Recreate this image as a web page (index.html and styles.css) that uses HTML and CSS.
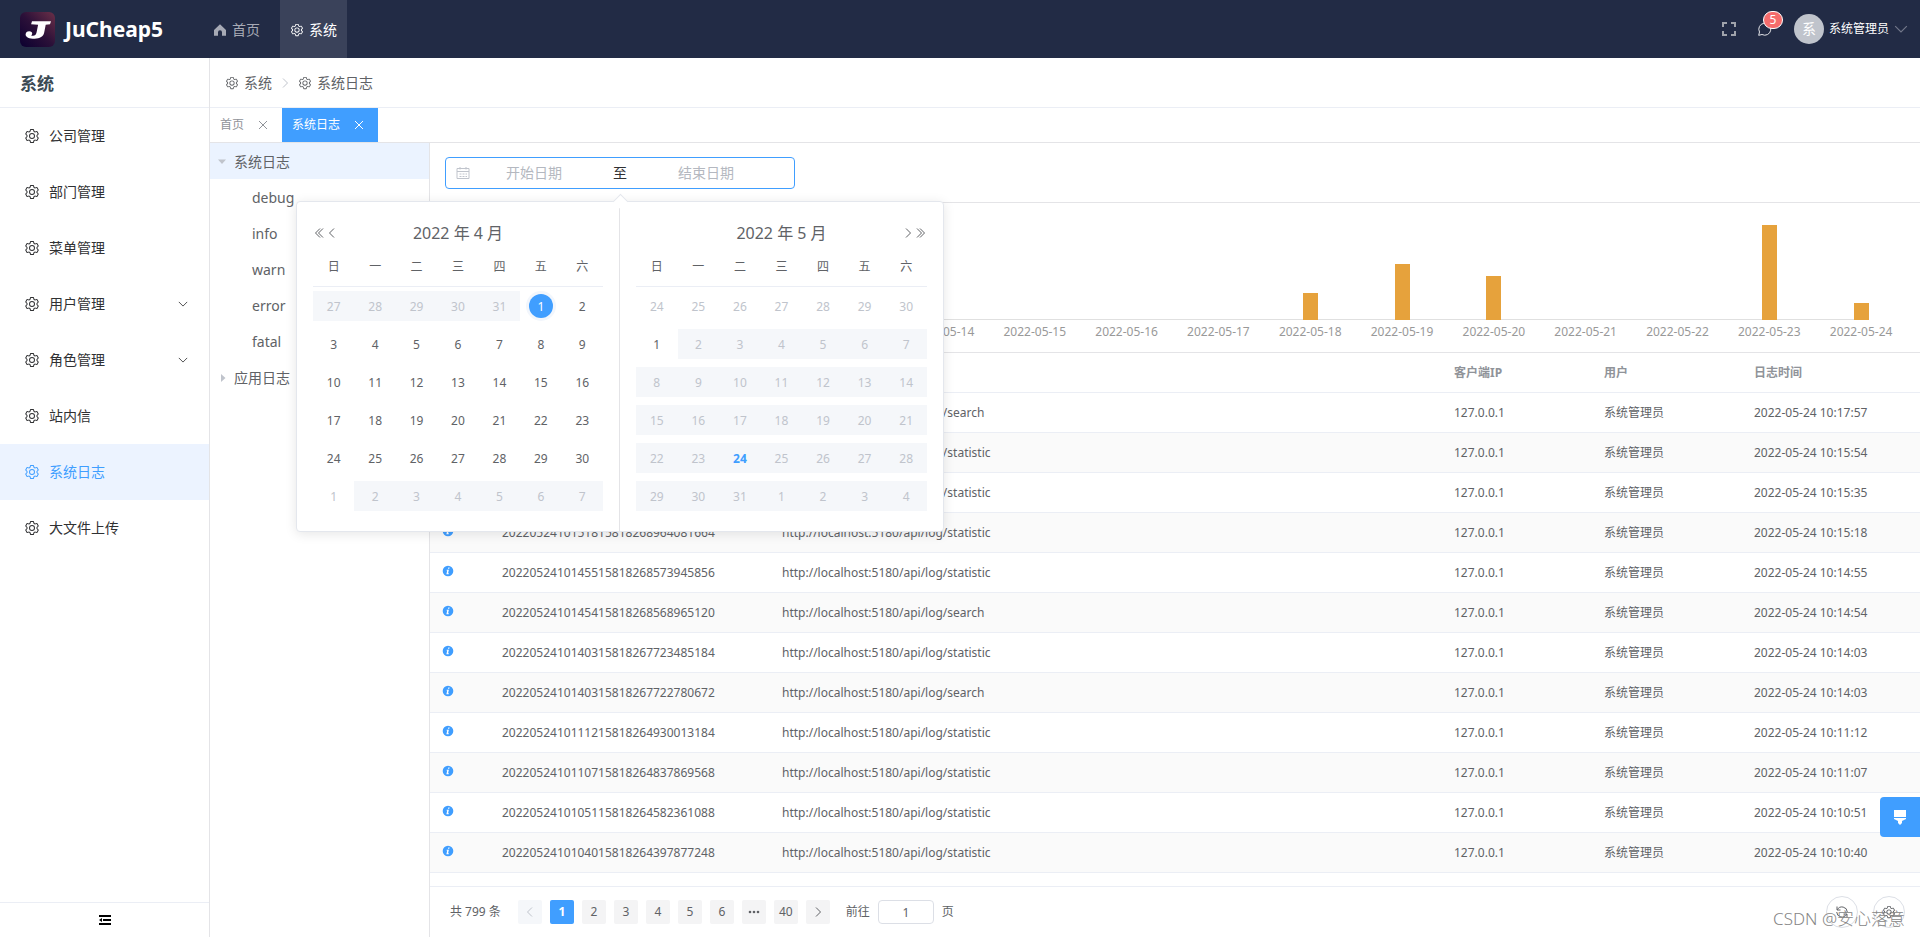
FILE: index.html
```html
<!DOCTYPE html>
<html lang="zh-CN">
<head>
<meta charset="utf-8">
<title>JuCheap5</title>
<link rel="stylesheet" href="styles.css">
</head>
<body>
<svg class="sprite" aria-hidden="true">
  <symbol id="gear" viewBox="0 0 1024 1024"><path d="M600.704 64a32 32 0 0 1 30.464 22.208l35.2 109.376c14.784 7.232 28.928 15.36 42.432 24.512l112.384-24.192a32 32 0 0 1 34.432 15.36L944.32 364.8a32 32 0 0 1-4.032 37.504l-77.12 85.12a357.12 357.12 0 0 1 0 49.024l77.12 85.248a32 32 0 0 1 4.032 37.504l-88.704 153.6a32 32 0 0 1-34.432 15.296L708.8 803.904c-13.44 9.088-27.648 17.28-42.368 24.512l-35.264 109.376A32 32 0 0 1 600.704 960H423.296a32 32 0 0 1-30.464-22.208L357.696 828.48a351.616 351.616 0 0 1-42.56-24.64l-112.32 24.256a32 32 0 0 1-34.432-15.36L79.68 659.2a32 32 0 0 1 4.032-37.504l77.12-85.248a357.12 357.12 0 0 1 0-48.896l-77.12-85.248A32 32 0 0 1 79.68 364.8l88.704-153.6a32 32 0 0 1 34.432-15.296l112.32 24.256c13.568-9.152 27.776-17.408 42.56-24.64l35.2-109.312A32 32 0 0 1 423.232 64H600.64zm-23.424 64H446.72l-36.352 113.088-24.512 11.968a294.113 294.113 0 0 0-34.816 20.096l-22.656 15.36-116.224-25.088-65.28 113.152 79.68 88.192-1.92 27.136a293.12 293.12 0 0 0 0 40.192l1.92 27.136-79.808 88.192 65.344 113.152 116.224-25.024 22.656 15.296a294.113 294.113 0 0 0 34.816 20.096l24.512 11.968L446.72 896h130.688l36.48-113.152 24.448-11.904a288.282 288.282 0 0 0 34.752-20.096l22.592-15.296 116.288 25.024 65.28-113.152-79.744-88.192 1.92-27.136a293.12 293.12 0 0 0 0-40.256l-1.92-27.136 79.808-88.128-65.344-113.152-116.288 24.96-22.592-15.232a287.616 287.616 0 0 0-34.752-20.096l-24.448-11.904L577.344 128zM512 320a192 192 0 1 1 0 384 192 192 0 0 1 0-384zm0 64a128 128 0 1 0 0 256 128 128 0 0 0 0-256z"/></symbol>
  <symbol id="home" viewBox="0 0 14 14"><path d="M7 1.300 13 7v5.700H9V9.200a2 2 0 0 0-4 0v3.500H1V7z"/></symbol>
  <symbol id="down" viewBox="0 0 12 12"><path class="line" d="M1 3.500 6 8.500l5-5"/></symbol>
  <symbol id="left" viewBox="0 0 12 12"><path class="line" d="M8 1.500 3.500 6 8 10.500"/></symbol>
  <symbol id="right" viewBox="0 0 12 12"><path class="line" d="M4 1.500 8.500 6 4 10.500"/></symbol>
  <symbol id="dleft" viewBox="0 0 12 12"><path class="line" d="M6 1.500 1.500 6 6 10.500M9 1.500 4.500 6l4.500 4.500"/></symbol>
  <symbol id="dright" viewBox="0 0 12 12"><path class="line" d="M3 1.500 7.500 6 3 10.500M6 1.500 10.500 6 6 10.500"/></symbol>
  <symbol id="close" viewBox="0 0 10 10"><path class="line" d="M1 1l8 8M9 1 1 9"/></symbol>
  <symbol id="info" viewBox="0 0 12 12"><circle cx="6" cy="6" r="5.300"/><path fill="#fff" d="M6.300 2.400h1.300L7.300 3.800H6zM4.700 4.700h2.200L6.100 8.300h.8l-.2.9H4.400l.8-3.600h-.7z"/></symbol>
</svg>

<div class="app">
  <header class="topbar">
    <a class="brand" href="#">
      <svg class="logo" viewBox="0 0 35 35" aria-hidden="true">
        <defs><linearGradient id="lg" x1="0" y1="1" x2="1" y2="0"><stop offset="0" stop-color="#0b0030"/><stop offset=".5" stop-color="#2b1038"/><stop offset="1" stop-color="#6b3048"/></linearGradient></defs>
        <rect width="35" height="35" rx="6" fill="url(#lg)"/>
        <path fill="#fff" d="M12 9.300h19l-1 2.900-4.300.6-1.500 7.800c-.8 4-4.300 6.200-9.600 6.200-5.400 0-9-1.500-9-4.300 0-2.100 1.500-3.300 3.600-3.300 2 0 3.200 1 3 2.600-.1.800-.5 1.300-1.100 1.700 3 1 4.900-.2 5.500-3.200l1.500-7.500-7-.6z"/>
      </svg>
      <span>JuCheap5</span>
    </a>
    <nav class="topnav">
      <a href="#"><svg class="i14"><use href="#home"/></svg>首页</a>
      <a href="#" class="on"><svg class="i14"><use href="#gear"/></svg>系统</a>
    </nav>
    <div class="tools">
      <button class="tool" aria-label="全屏"><svg class="i14 dim" viewBox="0 0 14 14"><path fill="none" stroke="currentColor" stroke-width="2" d="M1 5V1h4M9 1h4v4M13 9v4H9M5 13H1V9"/></svg></button>
      <button class="tool msg" aria-label="消息"><svg class="i14" viewBox="0 0 14 14"><path fill="none" stroke="currentColor" d="M.7 13.300 1.500 10A6 6 0 1 1 4 12.500z"/></svg><span class="badge">5</span></button>
      <button class="user"><span class="avatar">系</span>系统管理员<svg class="i14 caret"><use href="#down"/></svg></button>
    </div>
  </header>

  <div class="body">
    <aside class="side">
      <h2>系统</h2>
      <ul class="menu">
        <li><a href="#"><svg class="i16"><use href="#gear"/></svg>公司管理</a></li>
        <li><a href="#"><svg class="i16"><use href="#gear"/></svg>部门管理</a></li>
        <li><a href="#"><svg class="i16"><use href="#gear"/></svg>菜单管理</a></li>
        <li><a href="#"><svg class="i16"><use href="#gear"/></svg>用户管理<svg class="i10 end"><use href="#down"/></svg></a></li>
        <li><a href="#"><svg class="i16"><use href="#gear"/></svg>角色管理<svg class="i10 end"><use href="#down"/></svg></a></li>
        <li><a href="#"><svg class="i16"><use href="#gear"/></svg>站内信</a></li>
        <li><a href="#" class="on"><svg class="i16"><use href="#gear"/></svg>系统日志</a></li>
        <li><a href="#"><svg class="i16"><use href="#gear"/></svg>大文件上传</a></li>
      </ul>
      <button class="fold" aria-label="收起菜单"><svg class="i12" viewBox="0 0 12 12"><path d="M0 1h12v2H0zM4 5h8v2H4zM0 9h12v2H0zM3 4v4L0 6z"/></svg></button>
    </aside>

    <div class="main">
      <nav class="crumbs">
        <a href="#"><svg class="i14"><use href="#gear"/></svg>系统</a>
        <svg class="i12 sep"><use href="#right"/></svg>
        <a href="#"><svg class="i14"><use href="#gear"/></svg>系统日志</a>
      </nav>
      <div class="tabs">
        <button>首页<svg class="i10"><use href="#close"/></svg></button>
        <button class="on">系统日志<svg class="i10"><use href="#close"/></svg></button>
      </div>
      <div class="work">
        <ul class="tree">
          <li class="on"><i class="tri open"></i>系统日志</li>
          <li class="leaf">debug</li>
          <li class="leaf">info</li>
          <li class="leaf">warn</li>
          <li class="leaf">error</li>
          <li class="leaf">fatal</li>
          <li><i class="tri"></i>应用日志</li>
        </ul>

        <section class="panel">
          <div class="filter">
            <div class="range">
              <svg class="i14 cal" viewBox="0 0 14 14"><path fill="none" stroke="currentColor" d="M1 2.500h12v10H1zM1 5.500h12M4 1v2.500M10 1v2.500M3.500 8h2M6.500 8h2M9.500 8h1.500M3.500 10.500h2M6.500 10.500h2M9.500 10.500h1.500"/></svg>
              <input type="text" placeholder="开始日期" aria-label="开始日期">
              <span class="to">至</span>
              <input type="text" placeholder="结束日期" aria-label="结束日期">
              <div class="popup">
                <div class="month">
                  <div class="mhead">
                    <div class="arrows"><button aria-label="上一年"><svg class="i12"><use href="#dleft"/></svg></button><button aria-label="上个月"><svg class="i12"><use href="#left"/></svg></button></div>
                    <span>2022 年 4 月</span>
                    <div class="arrows"></div>
                  </div>
                  <table>
                    <thead><tr><th>日</th><th>一</th><th>二</th><th>三</th><th>四</th><th>五</th><th>六</th></tr></thead>
                    <tbody>
                    <tr><td class="off"><b>27</b></td><td class="off"><b>28</b></td><td class="off"><b>29</b></td><td class="off"><b>30</b></td><td class="off"><b>31</b></td><td class="sel"><b>1</b></td><td><b>2</b></td></tr>
                    <tr><td><b>3</b></td><td><b>4</b></td><td><b>5</b></td><td><b>6</b></td><td><b>7</b></td><td><b>8</b></td><td><b>9</b></td></tr>
                    <tr><td><b>10</b></td><td><b>11</b></td><td><b>12</b></td><td><b>13</b></td><td><b>14</b></td><td><b>15</b></td><td><b>16</b></td></tr>
                    <tr><td><b>17</b></td><td><b>18</b></td><td><b>19</b></td><td><b>20</b></td><td><b>21</b></td><td><b>22</b></td><td><b>23</b></td></tr>
                    <tr><td><b>24</b></td><td><b>25</b></td><td><b>26</b></td><td><b>27</b></td><td><b>28</b></td><td><b>29</b></td><td><b>30</b></td></tr>
                    <tr><td class="pale"><b>1</b></td><td class="off"><b>2</b></td><td class="off"><b>3</b></td><td class="off"><b>4</b></td><td class="off"><b>5</b></td><td class="off"><b>6</b></td><td class="off"><b>7</b></td></tr>
                    </tbody>
                  </table>
                </div>
                <div class="month">
                  <div class="mhead">
                    <div class="arrows"></div>
                    <span>2022 年 5 月</span>
                    <div class="arrows next"><button aria-label="下个月"><svg class="i12"><use href="#right"/></svg></button><button aria-label="下一年"><svg class="i12"><use href="#dright"/></svg></button></div>
                  </div>
                  <table>
                    <thead><tr><th>日</th><th>一</th><th>二</th><th>三</th><th>四</th><th>五</th><th>六</th></tr></thead>
                    <tbody>
                    <tr><td class="pale"><b>24</b></td><td class="pale"><b>25</b></td><td class="pale"><b>26</b></td><td class="pale"><b>27</b></td><td class="pale"><b>28</b></td><td class="pale"><b>29</b></td><td class="pale"><b>30</b></td></tr>
                    <tr><td><b>1</b></td><td class="off"><b>2</b></td><td class="off"><b>3</b></td><td class="off"><b>4</b></td><td class="off"><b>5</b></td><td class="off"><b>6</b></td><td class="off"><b>7</b></td></tr>
                    <tr><td class="off"><b>8</b></td><td class="off"><b>9</b></td><td class="off"><b>10</b></td><td class="off"><b>11</b></td><td class="off"><b>12</b></td><td class="off"><b>13</b></td><td class="off"><b>14</b></td></tr>
                    <tr><td class="off"><b>15</b></td><td class="off"><b>16</b></td><td class="off"><b>17</b></td><td class="off"><b>18</b></td><td class="off"><b>19</b></td><td class="off"><b>20</b></td><td class="off"><b>21</b></td></tr>
                    <tr><td class="off"><b>22</b></td><td class="off"><b>23</b></td><td class="off today"><b>24</b></td><td class="off"><b>25</b></td><td class="off"><b>26</b></td><td class="off"><b>27</b></td><td class="off"><b>28</b></td></tr>
                    <tr><td class="off"><b>29</b></td><td class="off"><b>30</b></td><td class="off"><b>31</b></td><td class="off"><b>1</b></td><td class="off"><b>2</b></td><td class="off"><b>3</b></td><td class="off"><b>4</b></td></tr>
                    </tbody>
                  </table>
                </div>
              </div>
            </div>
          </div>

          <div class="chart">
            <div class="day"><div class="plot"></div></div>
            <div class="day"><div class="plot"></div></div>
            <div class="day"><div class="plot"></div></div>
            <div class="day"><div class="plot"></div></div>
            <div class="day"><div class="plot"></div></div>
            <div class="day"><div class="plot"></div>2022-05-14</div>
            <div class="day"><div class="plot"></div>2022-05-15</div>
            <div class="day"><div class="plot"></div>2022-05-16</div>
            <div class="day"><div class="plot"></div>2022-05-17</div>
            <div class="day"><div class="plot"><i style="height:27px"></i></div>2022-05-18</div>
            <div class="day"><div class="plot"><i style="height:56px"></i></div>2022-05-19</div>
            <div class="day"><div class="plot"><i style="height:44px"></i></div>2022-05-20</div>
            <div class="day"><div class="plot"></div>2022-05-21</div>
            <div class="day"><div class="plot"></div>2022-05-22</div>
            <div class="day"><div class="plot"><i style="height:95px"></i></div>2022-05-23</div>
            <div class="day"><div class="plot"><i style="height:17px"></i></div>2022-05-24</div>
          </div>

          <div class="gridwrap">
            <table class="grid">
              <colgroup><col class="c-icon"><col class="c-id"><col><col class="c-mid"><col class="c-mid"><col class="c-time"></colgroup>
              <thead><tr><th></th><th></th><th></th><th>客户端IP</th><th>用户</th><th>日志时间</th></tr></thead>
              <tbody>
              <tr><td><svg class="i12"><use href="#info"/></svg></td><td></td><td>http://localhost:5180/api/log/search</td><td>127.0.0.1</td><td>系统管理员</td><td>2022-05-24 10:17:57</td></tr>
              <tr><td><svg class="i12"><use href="#info"/></svg></td><td></td><td>http://localhost:5180/api/log/statistic</td><td>127.0.0.1</td><td>系统管理员</td><td>2022-05-24 10:15:54</td></tr>
              <tr><td><svg class="i12"><use href="#info"/></svg></td><td></td><td>http://localhost:5180/api/log/statistic</td><td>127.0.0.1</td><td>系统管理员</td><td>2022-05-24 10:15:35</td></tr>
              <tr><td><svg class="i12"><use href="#info"/></svg></td><td>2022052410151815818268964081664</td><td>http://localhost:5180/api/log/statistic</td><td>127.0.0.1</td><td>系统管理员</td><td>2022-05-24 10:15:18</td></tr>
              <tr><td><svg class="i12"><use href="#info"/></svg></td><td>2022052410145515818268573945856</td><td>http://localhost:5180/api/log/statistic</td><td>127.0.0.1</td><td>系统管理员</td><td>2022-05-24 10:14:55</td></tr>
              <tr><td><svg class="i12"><use href="#info"/></svg></td><td>2022052410145415818268568965120</td><td>http://localhost:5180/api/log/search</td><td>127.0.0.1</td><td>系统管理员</td><td>2022-05-24 10:14:54</td></tr>
              <tr><td><svg class="i12"><use href="#info"/></svg></td><td>2022052410140315818267723485184</td><td>http://localhost:5180/api/log/statistic</td><td>127.0.0.1</td><td>系统管理员</td><td>2022-05-24 10:14:03</td></tr>
              <tr><td><svg class="i12"><use href="#info"/></svg></td><td>2022052410140315818267722780672</td><td>http://localhost:5180/api/log/search</td><td>127.0.0.1</td><td>系统管理员</td><td>2022-05-24 10:14:03</td></tr>
              <tr><td><svg class="i12"><use href="#info"/></svg></td><td>2022052410111215818264930013184</td><td>http://localhost:5180/api/log/statistic</td><td>127.0.0.1</td><td>系统管理员</td><td>2022-05-24 10:11:12</td></tr>
              <tr><td><svg class="i12"><use href="#info"/></svg></td><td>2022052410110715818264837869568</td><td>http://localhost:5180/api/log/statistic</td><td>127.0.0.1</td><td>系统管理员</td><td>2022-05-24 10:11:07</td></tr>
              <tr><td><svg class="i12"><use href="#info"/></svg></td><td>2022052410105115818264582361088</td><td>http://localhost:5180/api/log/statistic</td><td>127.0.0.1</td><td>系统管理员</td><td>2022-05-24 10:10:51</td></tr>
              <tr><td><svg class="i12"><use href="#info"/></svg></td><td>2022052410104015818264397877248</td><td>http://localhost:5180/api/log/statistic</td><td>127.0.0.1</td><td>系统管理员</td><td>2022-05-24 10:10:40</td></tr>
              <tr><td></td><td></td><td></td><td></td><td></td><td></td></tr>
              </tbody>
            </table>
          </div>

          <footer class="pager">
            <span>共 799 条</span>
            <div class="pages">
              <button disabled aria-label="上一页"><svg class="i12"><use href="#left"/></svg></button>
              <button class="on">1</button><button>2</button><button>3</button><button>4</button><button>5</button><button>6</button>
              <button aria-label="更多"><svg class="i12" viewBox="0 0 12 12"><circle cx="2" cy="6" r="1.300"/><circle cx="6" cy="6" r="1.300"/><circle cx="10" cy="6" r="1.300"/></svg></button>
              <button>40</button>
              <button aria-label="下一页"><svg class="i12"><use href="#right"/></svg></button>
            </div>
            <label>前往<input type="text" value="1">页</label>
            <div class="rounds">
              <button aria-label="刷新"><svg class="i14" viewBox="0 0 14 14"><path fill="none" stroke="currentColor" d="M2 1.500V5h3.500M2.300 4.800A5.300 5.300 0 0 1 12.300 7M12 12.500V9H8.500M11.700 9.200A5.300 5.300 0 0 1 1.700 7"/></svg></button>
              <button aria-label="列设置"><svg class="i14"><use href="#gear"/></svg></button>
              <span class="mark">CSDN @安心落意</span>
            </div>
          </footer>
        </section>
      </div>
    </div>
  </div>
  <button class="theme" aria-label="主题"><svg class="i16" viewBox="0 0 16 16"><path d="M2 1h12v7H2zM2 9h12v1l-4 2v2l-2 2-2-2v-2l-4-2z"/></svg></button>
</div>
</body>
</html>
```

FILE: styles.css
```css
* { box-sizing: border-box; }
body {
  margin: 0;
  font: 14px/20px "Noto Sans", "Noto Sans CJK SC", sans-serif;
  color: #606266;
  background: #fff;
}
a { color: inherit; text-decoration: none; }
button { border: 0; padding: 0; background: none; color: inherit; font: inherit; }
ul { list-style: none; margin: 0; padding: 0; }
svg { fill: currentColor; flex: none; display: block; }
.sprite { position: absolute; width: 0; height: 0; }
.line { fill: none; stroke: currentColor; }
.i10 { width: 10px; height: 10px; }
.i12 { width: 12px; height: 12px; }
.i14 { width: 14px; height: 14px; }
.i16 { width: 16px; height: 16px; }

.app { display: flex; flex-direction: column; height: 100vh; overflow: hidden; }

/* top bar */
.topbar { display: flex; flex: none; height: 58px; background: #222b45; color: #fff; }
.brand { display: flex; align-items: center; gap: 10px; width: 203px; padding-left: 20px; font-size: 21px; font-weight: 700; }
.logo { width: 35px; height: 35px; }
.topnav { display: flex; gap: 10px; }
.topnav a { display: flex; align-items: center; gap: 5px; padding: 2px 10px 0; color: #a7aab5; }
.topnav a.on { background: #3a425a; color: #fff; }
.tools { display: flex; align-items: center; gap: 22px; margin-left: auto; padding-right: 12px; }
.dim { color: #a0a3ab; }
.msg { position: relative; color: #e4e5e9; }
.badge {
  position: absolute; left: 5px; top: -11px;
  min-width: 20px; height: 18px; padding: 0 5px;
  border: 1px solid #fff; border-radius: 9px;
  background: #f56c6c; color: #fff; font-size: 12px; line-height: 16px; text-align: center;
}
.user { display: flex; align-items: center; gap: 5px; font-size: 12px; color: #fff; }
.avatar { width: 30px; height: 30px; border-radius: 50%; background: #c0c4cc; font-size: 14px; line-height: 30px; text-align: center; }
.caret { color: #73788a; }

.body { display: flex; flex: 1; min-height: 0; }

/* side menu */
.side { display: flex; flex-direction: column; flex: none; width: 210px; border-right: 1px solid #e4e4e7; }
.side h2 { margin: 0; height: 50px; padding: 2px 0 0 20px; border-bottom: 1px solid #ebeef5; font-size: 17px; line-height: 48px; color: #3c4a54; }
.menu { flex: 1; }
.menu a { display: flex; align-items: center; gap: 9px; height: 56px; padding: 0 21px 0 24px; color: #303133; }
.menu a.on { background: #ecf3ff; color: #409eff; }
.end { margin-left: auto; }
.fold { display: flex; justify-content: center; align-items: center; height: 35px; border-top: 1px solid #ebeef5; color: #000; }

.main { display: flex; flex-direction: column; flex: 1; min-width: 0; }
.crumbs { display: flex; align-items: center; gap: 7px; height: 50px; padding-left: 15px; border-bottom: 1px solid #ebeef5; }
.crumbs a { display: flex; align-items: center; gap: 5px; }
.sep { color: #c0c4cc; }
.tabs { display: flex; height: 35px; border-bottom: 1px solid #e4e4e7; }
.tabs button { display: flex; align-items: center; gap: 14px; padding: 0 14px 0 10px; color: #909399; font-size: 12px; }
.tabs .on { background: #409eff; color: #fff; }

.work { display: flex; flex: 1; min-height: 0; }
.tree { flex: none; width: 220px; border-right: 1px solid #e4e4e7; }
.tree li { display: flex; align-items: center; gap: 7px; height: 36px; padding: 2px 0 0 7px; }
.tree li.on { background: #ebf3ff; }
.tree li.leaf { padding-left: 42px; }
.tri { width: 10px; height: 8px; background: #c0c4cc; clip-path: polygon(40% 0, 85% 50%, 40% 100%); }
.tri.open { clip-path: polygon(10% 20%, 90% 20%, 50% 75%); }

.panel { display: flex; flex-direction: column; flex: 1; min-width: 0; }
.filter { height: 60px; padding: 14px 15px; border-bottom: 1px solid #e4e4e7; }
.range { position: relative; display: flex; align-items: center; width: 350px; height: 32px; padding-left: 10px; border: 1px solid #409eff; border-radius: 4px; }
.range input { width: 128px; border: 0; padding: 0; outline: 0; background: none; font: inherit; text-align: center; }
.range input::placeholder { color: #b4b8c0; }
.cal { color: #c0c4cc; }
.to { width: 44px; text-align: center; color: #303133; }

/* date range popup */
.popup {
  position: absolute; z-index: 2; left: -150px; top: 43px;
  display: flex; border: 1px solid #e4e7ed; border-radius: 4px;
  background: #fff; box-shadow: 0 2px 12px rgba(0, 0, 0, .1);
}
.popup::before {
  content: ""; position: absolute; left: 318px; top: -6px; width: 10px; height: 10px;
  background: #fff; border: solid #e4e7ed; border-width: 1px 0 0 1px; transform: rotate(45deg);
}
.month { width: 323px; padding: 16px; }
.month:first-child { border-right: 1px solid #e4e4e7; }
.mhead { display: flex; justify-content: space-between; align-items: center; height: 30px; font-size: 16px; }
.arrows { display: flex; width: 32px; padding-left: 1px; }
.arrows.next { justify-content: flex-end; padding: 0 1px 0 0; }
.month table { width: 100%; table-layout: fixed; border-collapse: separate; border-spacing: 0; font-size: 12px; text-align: center; }
.month th { height: 39px; padding: 0; border-bottom: 1px solid #ebeef5; font-weight: 400; }
.month td { height: 38px; padding: 4px 0; }
.month b { display: block; height: 30px; padding-top: 1px; font-weight: 400; line-height: 30px; }
.pale { color: #c0c4cc; }
.off b { background: #f5f7fa; color: #c0c4cc; }
.today b { color: #409eff; font-weight: 700; }
.month .sel b { width: 24px; height: 24px; margin: 0 auto; border-radius: 50%; background: #409eff; box-shadow: 0 0 0 3px #f2f6fc; color: #fff; line-height: 24px; }

/* daily counts */
.chart { display: grid; grid-template-columns: repeat(16, 1fr); height: 150px; padding: 16px 13px 0 8px; border-bottom: 1px solid #e4e4e7; color: #999; font-size: 12px; text-align: center; white-space: nowrap; }
.plot { display: flex; justify-content: center; align-items: flex-end; height: 101px; margin-bottom: 2px; background: linear-gradient(#e0e0e0, #e0e0e0) left bottom / 100% 1px no-repeat; }
.plot i { width: 15px; background: #e6a23c; }
.day:last-child .plot { background-size: 50% 1px; }

.gridwrap { flex: 1; min-height: 0; overflow: hidden; }
.grid { width: 100%; table-layout: fixed; border-collapse: separate; border-spacing: 0; font-size: 12px; text-align: left; }
.c-icon { width: 60px; }
.c-id { width: 280px; }
.c-mid { width: 150px; }
.c-time { width: 178px; }
.grid th, .grid td { height: 40px; padding: 0 12px; border-bottom: 1px solid #ebeef5; white-space: nowrap; }
.grid th { color: #909399; font-weight: 700; }
.grid tbody tr:nth-child(even) { background: #fafafa; }
.grid svg { margin-bottom: 3px; color: #409eff; }

.pager { display: flex; align-items: center; height: 51px; padding: 0 15px 0 20px; border-top: 1px solid #ebeef5; font-size: 12px; }
.pages { display: flex; gap: 8px; margin: 0 16px 0 17px; }
.pages button { display: flex; justify-content: center; align-items: center; min-width: 24px; height: 24px; border-radius: 2px; background: #f4f4f5; }
.pages button:disabled { background: #f5f7fa; color: #c0c4cc; }
.pages .on { background: #409eff; color: #fff; font-weight: 700; }
.pager label { display: flex; align-items: center; gap: 8px; }
.pager input { width: 56px; height: 24px; border: 1px solid #dcdfe6; border-radius: 4px; padding: 0; color: inherit; font: inherit; text-align: center; }
.rounds { position: relative; display: flex; gap: 15px; margin-left: auto; }
.rounds button { display: flex; justify-content: center; align-items: center; width: 32px; height: 32px; border: 1px solid #dcdfe6; border-radius: 50%; }
.mark { position: absolute; right: 0; top: 12px; color: #858585; font-size: 17px; font-weight: 300; line-height: 22px; white-space: nowrap; }

.theme { position: fixed; right: 0; bottom: 100px; z-index: 3; display: flex; justify-content: center; align-items: center; width: 40px; height: 40px; border-radius: 4px 0 0 4px; background: #409eff; color: #fff; }
```
